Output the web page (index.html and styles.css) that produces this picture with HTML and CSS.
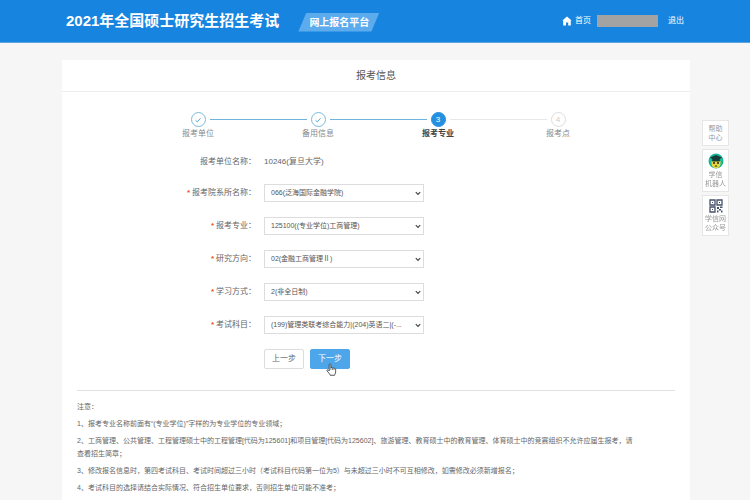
FILE: index.html
```html
<!doctype html>
<html lang="zh-CN">
  <head>
    <meta charset="UTF-8" />
    <meta name="viewport" content="width=device-width, initial-scale=1" />
    <title>报考信息</title>
    <link rel="stylesheet" href="styles.css" />
  </head>
  <body>
    <header class="header">
      <div class="header-inner">
        <h1>2021年全国硕士研究生招生考试</h1>
        <span class="platform">网上报名平台</span>
        <nav class="user-nav">
          <a href="#" class="home">
            <svg viewBox="0 0 10 10" width="10" height="10" aria-hidden="true">
              <path d="M5 0.5 9.6 4.6H8.8V9.5H6.2V6.5H4V9.5H1.2V4.6H0.4Z" fill="#fff" />
            </svg>
            首页
          </a>
          <span class="user-name"></span>
          <a href="#">退出</a>
        </nav>
      </div>
    </header>

    <main class="card">
      <h2>报考信息</h2>

      <ol class="steps">
        <li class="step done">
          <span class="dot">
            <svg viewBox="0 0 8 8" width="8" height="8" aria-hidden="true">
              <path d="M1.5 4.2 3.3 5.9 6.6 2.2" fill="none" stroke="#5aa7cf" />
            </svg>
          </span>
          <span class="step-name">报考单位</span>
        </li>
        <li class="step done">
          <span class="dot">
            <svg viewBox="0 0 8 8" width="8" height="8" aria-hidden="true">
              <path d="M1.5 4.2 3.3 5.9 6.6 2.2" fill="none" stroke="#5aa7cf" />
            </svg>
          </span>
          <span class="step-name">备用信息</span>
        </li>
        <li class="step current">
          <span class="dot">3</span>
          <span class="step-name">报考专业</span>
        </li>
        <li class="step">
          <span class="dot">4</span>
          <span class="step-name">报考点</span>
        </li>
      </ol>

      <form class="form">
        <div class="row row-text">
          <span class="label">报考单位名称：</span>
          <span>10246(复旦大学)</span>
        </div>
        <div class="row">
          <label class="label required" for="department">报考院系所名称：</label>
          <select id="department">
            <option>066(泛海国际金融学院)</option>
          </select>
        </div>
        <div class="row">
          <label class="label required" for="major">报考专业：</label>
          <select id="major">
            <option>125100((专业学位)工商管理)</option>
          </select>
        </div>
        <div class="row">
          <label class="label required" for="direction">研究方向：</label>
          <select id="direction">
            <option>02(金融工商管理Ⅱ)</option>
          </select>
        </div>
        <div class="row">
          <label class="label required" for="mode">学习方式：</label>
          <select id="mode">
            <option>2(非全日制)</option>
          </select>
        </div>
        <div class="row">
          <label class="label required" for="subject">考试科目：</label>
          <select id="subject">
            <option>(199)管理类联考综合能力|(204)英语二|(-...</option>
          </select>
        </div>
        <div class="buttons">
          <button type="button">上一步</button>
          <button type="button" class="primary">
            下一步
            <svg class="pointer" viewBox="0 0 12 14" width="11" height="13" aria-hidden="true">
              <path
                d="M3.5 8.5V1.8C3.5 0.5 5.3 0.5 5.3 1.8V5.3C5.6 4.5 7 4.7 7 5.6 7.4 4.9 8.7 5.1 8.7 6 9.2 5.4 10.5 5.7 10.5 6.8V9.5C10.5 11.5 9.6 12 9.4 13.3H4.6C4.3 11.6 2.5 10.5 1.2 8.5 0.7 7.5 1.9 6.9 2.6 7.6Z"
                fill="#fff"
                stroke="#333"
                stroke-width="0.9"
              />
              <path d="M5.3 5.3V7.5M7 5.8V7.5M8.7 6.2V7.5" stroke="#333" stroke-width="0.7" />
            </svg>
          </button>
        </div>
      </form>

      <section class="notes">
        <p>注意：</p>
        <p>1、报考专业名称前面有“(专业学位)”字样的为专业学位的专业领域；</p>
        <p>
          2、工商管理、公共管理、工程管理硕士中的工程管理[代码为125601]和项目管理[代码为125602]、旅游管理、教育硕士中的教育管理、体育硕士中的竞赛组织不允许应届生报考，请<br />查看招生简章；
        </p>
        <p>3、修改报名信息时，第四考试科目、考试时间超过三小时（考试科目代码第一位为5）与未超过三小时不可互相修改，如需修改必须新增报名；</p>
        <p>4、考试科目的选择请结合实际情况、符合招生单位要求，否则招生单位可能不准考；</p>
      </section>
    </main>

    <aside class="side">
      <a href="#">帮助<br />中心</a>
      <a href="#">
        <svg viewBox="0 0 16 16" width="16" height="16" aria-hidden="true">
          <circle cx="8" cy="8" r="7.5" fill="#19b89a" />
          <path d="M3.5 8H12.5V11Q11.5 15.3 8 15.3T3.5 11Z" fill="#e8d93c" />
          <path d="M2 4.5 8 2 14 4.5 11.8 6V8.5H4.2V6Z" fill="#173b38" />
          <circle cx="6" cy="10" r="1" fill="#222" />
          <circle cx="10" cy="10" r="1" fill="#222" />
          <path d="M6.5 13.5 8 12 9.5 13.5Z" fill="#222" />
        </svg>
        学信<br />机器人
      </a>
      <a href="#">
        <svg viewBox="0 0 14 14" width="14" height="14" aria-hidden="true">
          <g fill="none" stroke="#46526b" stroke-width="1.3">
            <path d="M1 1H6V6H1ZM8 1H13V6H8ZM1 8H6V13H1Z" />
          </g>
          <path
            d="M3 3H4V4H3ZM10 3H11V4H10ZM3 10H4V11H3ZM8 8H10V10H8ZM11 7.5H13.5V9H11ZM10 10H12V11.5H10ZM8 11.5H9.5V13.5H8ZM12 11.5H13.5V13.5H12Z"
            fill="#46526b"
          />
        </svg>
        学信网<br />公众号
      </a>
    </aside>
  </body>
</html>
```

FILE: styles.css
```css
* {
  box-sizing: border-box;
}
body {
  margin: 0;
  min-height: 100vh;
  overflow: hidden;
  background: #f6f6f6;
  color: #666;
  font-family: 'Liberation Sans', 'Noto Sans CJK SC', sans-serif;
  font-size: 8px;
  line-height: 12px;
}
a {
  color: inherit;
  text-decoration: none;
}
.header {
  background: #1785e0;
  border-bottom: 1px solid #5ba3dc;
  color: #fff;
}
.header-inner {
  display: flex;
  align-items: center;
  max-width: 618px;
  height: 42px;
  margin: 0 auto;
}
h1 {
  margin: 0;
  font-size: 15px;
  line-height: 20px;
}
.platform {
  margin: 2px 0 0 19px;
  padding: 0 10px 0 11px;
  background: #5cabed;
  font-size: 10px;
  font-weight: 700;
  line-height: 19px;
  clip-path: polygon(8px 0, 100% 0, calc(100% - 8px) 100%, 0 100%);
}
.user-nav {
  display: flex;
  align-items: center;
  margin-left: auto;
}
.home {
  display: flex;
  align-items: center;
  gap: 3px;
}
.user-name {
  width: 61px;
  height: 12px;
  margin: 0 10px 0 6px;
  background: #a3a3a3;
}
.card {
  min-height: 440px;
  margin: 17px 60px 0 62px;
  background: #fff;
}
h2 {
  margin: 0;
  border-bottom: 1px solid #eee;
  color: #555;
  font-size: 10px;
  font-weight: 400;
  line-height: 31px;
  text-align: center;
}
.steps {
  display: grid;
  grid-template-columns: repeat(4, 1fr);
  max-width: 480px;
  margin: 20px 0 0 76px;
  padding: 0;
  list-style: none;
}
.step {
  display: grid;
  grid-template-columns: 1fr 15px 1fr;
  column-gap: 4px;
  align-items: center;
  color: #888;
}
.step::before,
.step::after {
  content: '';
  height: 1px;
  background: #e8e8e8;
}
.step::before {
  grid-area: 1 / 1;
}
.step::after {
  grid-area: 1 / 3;
}
.step.done::before,
.step.done::after,
.step.current::before {
  background: #6fb4dc;
}
.step:first-child::before,
.step:last-child::after {
  visibility: hidden;
}
.dot {
  grid-area: 1 / 2;
  display: flex;
  align-items: center;
  justify-content: center;
  height: 15px;
  border: 1px solid #ddd;
  border-radius: 50%;
  color: #ccc;
}
.done .dot {
  border-color: #7dbbdc;
}
.current .dot {
  background: #2590e0;
  border-color: #2590e0;
  color: #fff;
}
.step-name {
  grid-area: 2 / 1 / 3 / 4;
  line-height: 14px;
  text-align: center;
}
.current .step-name {
  color: #444;
  font-weight: 700;
}
.form {
  padding: 15px 0 21px;
}
.row {
  display: grid;
  grid-template-columns: 194px 160px;
  column-gap: 8px;
  align-items: center;
  margin-bottom: 15px;
}
.row-text {
  margin-bottom: 16px;
}
.label {
  text-align: right;
}
.required::before {
  content: '*';
  margin-right: 2px;
  color: #e8541e;
  font-weight: 700;
}
select {
  width: 100%;
  height: 18px;
  padding: 0 10px 0 6px;
  border: 1px solid #ddd;
  border-radius: 0;
  appearance: none;
  background: #fff
    url("data:image/svg+xml,%3Csvg xmlns='http://www.w3.org/2000/svg' width='6' height='5' viewBox='0 0 6 5'%3E%3Cpath d='M.8 1.2 3 3.4 5.2 1.2' fill='none' stroke='%23444' stroke-width='1.2'/%3E%3C/svg%3E")
    no-repeat right 2px center;
  color: #555;
  font: inherit;
  font-size: 7px;
}
.buttons {
  display: flex;
  gap: 6px;
  padding-left: 202px;
}
button {
  position: relative;
  width: 40px;
  height: 20px;
  padding: 0;
  border: 1px solid #ddd;
  border-radius: 2px;
  background: #fff;
  color: #666;
  font: inherit;
}
.primary {
  border-color: #4ea6ea;
  background: #4ea6ea;
  color: #fff;
}
/* hand cursor over the button */
.pointer {
  position: absolute;
  top: 13px;
  left: 15px;
}
.notes {
  margin: 0 15px;
  padding: 9px 0;
  border-top: 1px solid #e2e2e2;
  font-size: 7px;
  line-height: 13px;
}
.notes p {
  margin: 0 0 4px;
}
/* shortcuts floating at the right edge of the window */
.side {
  position: fixed;
  top: 120px;
  right: 21px;
  display: grid;
  gap: 3px;
  width: 27px;
}
.side a {
  display: block;
  padding: 3px 0;
  border: 1px solid #e6e6e6;
  background: #fff;
  color: #999;
  font-size: 7px;
  line-height: 9px;
  text-align: center;
}
.side svg {
  display: block;
  margin: 0 auto 1px;
}
```
